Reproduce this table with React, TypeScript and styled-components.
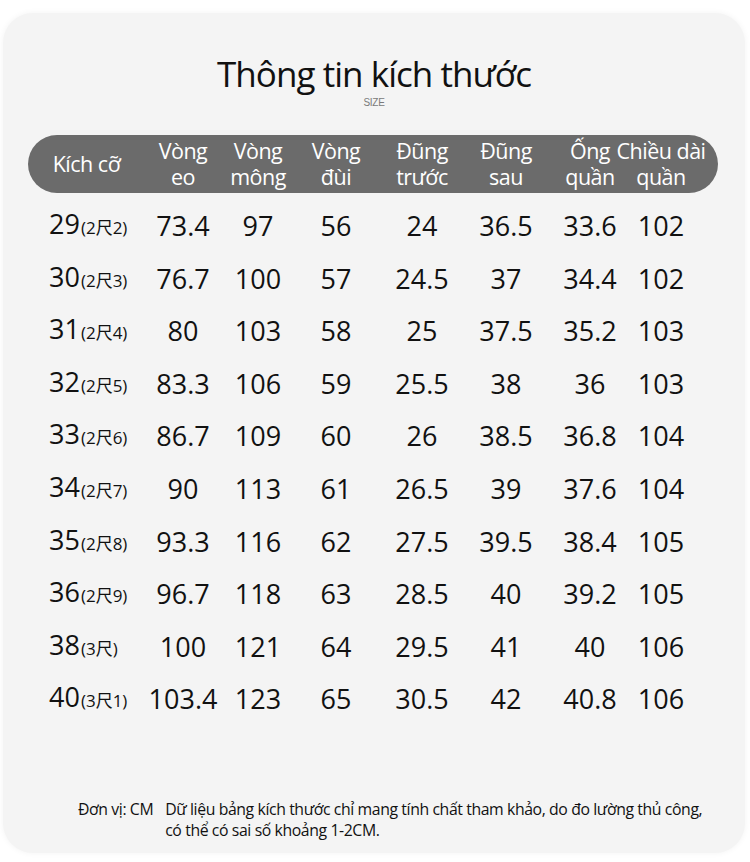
import React from "react";
import styled, { createGlobalStyle } from "styled-components";

const GlobalStyle = createGlobalStyle`
  html, body { margin: 0; padding: 0; background: #ffffff; }
  body { font-family: "Open Sans", "Noto Sans", "Noto Sans CJK SC", sans-serif; color: #111; }
  * { box-sizing: border-box; }
`;

const Page = styled.div`
  width: 750px;
  height: 862px;
  padding: 13px 5px 0 3px;
`;

const Card = styled.div`
  width: 742px;
  height: 840px;
  background: #f4f4f4;
  border-radius: 30px;
  box-shadow: 0 0 6px rgba(0, 0, 0, 0.05);
  display: flex;
  flex-direction: column;
  padding-top: 41px;
`;

const Title = styled.h1`
  margin: 0;
  font-family: "Open Sans", "Noto Sans", sans-serif;
  font-weight: 400;
  font-size: 35px;
  letter-spacing: -0.95px;
  line-height: 40px;
  text-align: center;
  color: #111;
`;

const Subtitle = styled.div`
  margin-top: 3px;
  font-family: "Liberation Sans", sans-serif;
  font-size: 10px;
  line-height: 12px;
  text-align: center;
  color: #7a7a7a;
  letter-spacing: -0.3px;
`;

const COLS = "117px 76px 74px 82px 90px 78px 90px 52px";

const HeaderPill = styled.div`
  margin: 26px 0 0 25px;
  width: 690px;
  height: 58px;
  border-radius: 29px;
  background: #6b6b6b;
  display: grid;
  grid-template-columns: ${COLS};
  padding-right: 31px;
  align-items: center;
`;

const HeadCell = styled.div`
  display: flex;
  flex-direction: column;
  align-items: center;
  white-space: nowrap;
  color: #ffffff;
  font-size: 21.5px;
  letter-spacing: -0.5px;
`;

const HeadLine = styled.div`
  height: 26px;
  line-height: 26px;
`;

const Rows = styled.div`
  margin: 6.7px 0 0 25px;
  width: 690px;
  display: flex;
  flex-direction: column;
`;

const Row = styled.div`
  height: 52.6px;
  display: grid;
  grid-template-columns: ${COLS};
  padding-right: 31px;
  align-items: center;
`;

const Cell = styled.div<{ $first?: boolean }>`
  display: flex;
  justify-content: ${(p) => (p.$first ? "flex-start" : "center")};
  align-items: baseline;
  padding-left: ${(p) => (p.$first ? "21px" : "0")};
  white-space: nowrap;
  font-size: 27px;
  line-height: 36px;
  color: #111;
`;

const SizeNote = styled.span`
  font-family: "Open Sans", "Noto Sans CJK SC", sans-serif;
  font-size: 17px;
  margin-left: 1px;
`;

const Footer = styled.div`
  margin: 73px 0 0 75px;
  display: flex;
  gap: 12px;
  font-size: 15.8px;
  line-height: 21px;
  letter-spacing: -0.4px;
  color: #111;
`;

const FooterLabel = styled.div`
  white-space: nowrap;
`;

const FooterText = styled.div`
  white-space: nowrap;
`;

const headers: string[][] = [
  ["Kích cỡ"],
  ["Vòng", "eo"],
  ["Vòng", "mông"],
  ["Vòng", "đùi"],
  ["Đũng", "trước"],
  ["Đũng", "sau"],
  ["Ống", "quần"],
  ["Chiều dài", "quần"],
];

const rows: string[][] = [
  ["29", "2尺2", "73.4", "97", "56", "24", "36.5", "33.6", "102"],
  ["30", "2尺3", "76.7", "100", "57", "24.5", "37", "34.4", "102"],
  ["31", "2尺4", "80", "103", "58", "25", "37.5", "35.2", "103"],
  ["32", "2尺5", "83.3", "106", "59", "25.5", "38", "36", "103"],
  ["33", "2尺6", "86.7", "109", "60", "26", "38.5", "36.8", "104"],
  ["34", "2尺7", "90", "113", "61", "26.5", "39", "37.6", "104"],
  ["35", "2尺8", "93.3", "116", "62", "27.5", "39.5", "38.4", "105"],
  ["36", "2尺9", "96.7", "118", "63", "28.5", "40", "39.2", "105"],
  ["38", "3尺", "100", "121", "64", "29.5", "41", "40", "106"],
  ["40", "3尺1", "103.4", "123", "65", "30.5", "42", "40.8", "106"],
];

export default function App() {
  return (
    <>
      <GlobalStyle />
      <Page>
        <Card>
          <Title>Thông tin kích thước</Title>
          <Subtitle>SIZE</Subtitle>
          <HeaderPill>
            {headers.map((h, i) => (
              <HeadCell key={i}>
                {h.map((line, j) => (
                  <HeadLine key={j}>{line}</HeadLine>
                ))}
              </HeadCell>
            ))}
          </HeaderPill>
          <Rows>
            {rows.map((r) => (
              <Row key={r[0]}>
                <Cell $first>
                  {r[0]}
                  <SizeNote>({r[1]})</SizeNote>
                </Cell>
                {r.slice(2).map((v, i) => (
                  <Cell key={i}>{v}</Cell>
                ))}
              </Row>
            ))}
          </Rows>
          <Footer>
            <FooterLabel>Đơn vị: CM</FooterLabel>
            <FooterText>
              Dữ liệu bảng kích thước chỉ mang tính chất tham khảo, do đo lường thủ công,
              <br />
              có thể có sai số khoảng 1-2CM.
            </FooterText>
          </Footer>
        </Card>
      </Page>
    </>
  );
}
